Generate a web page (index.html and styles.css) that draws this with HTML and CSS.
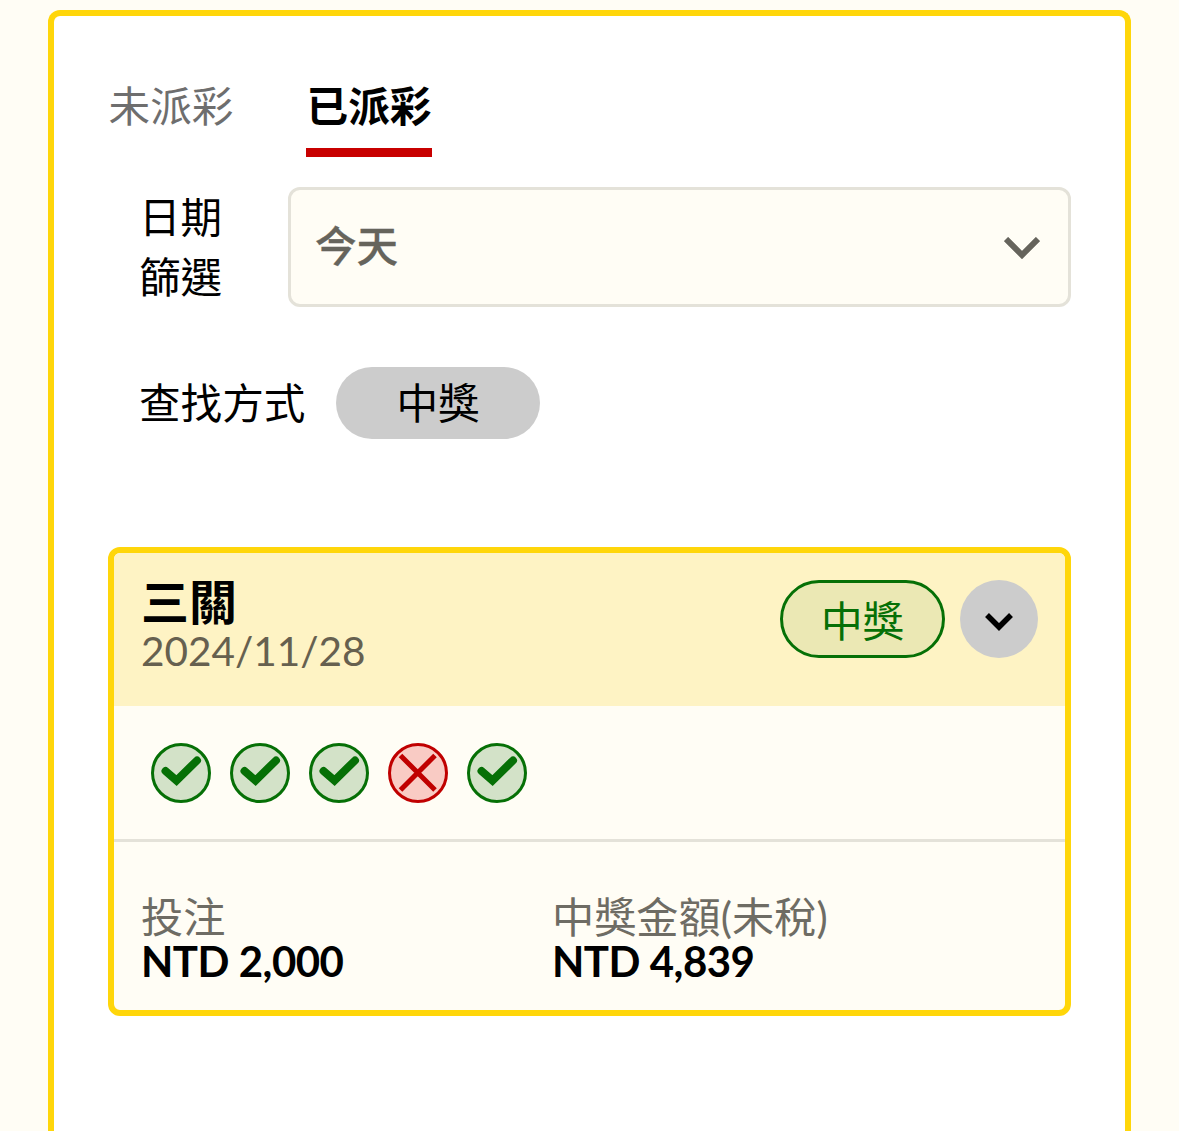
FILE: index.html
```html
<!DOCTYPE html>
<html lang="zh-Hant">
<head>
    <meta charset="utf-8">
    <title>已派彩</title>
    <link rel="stylesheet" href="styles.css">
</head>
<body>
<div class="panel">
    <div class="tabs">
        <div class="tab">未派彩</div>
        <div class="tab tab-active">已派彩</div>
    </div>

    <div class="date-row">
        <div class="date-label">日期<br>篩選</div>
        <div class="select">
            <span class="select-text">今天</span>
            <svg class="select-arrow" width="36" height="22" viewBox="0 0 36 22"><path d="M2 2 L18 18 L34 2" fill="none" stroke="#66645c" stroke-width="6"/></svg>
        </div>
    </div>

    <div class="find-row">
        <div class="find-label">查找方式</div>
        <div class="pill">中獎</div>
    </div>

    <div class="card">
        <div class="card-head">
            <div class="card-title">
                <div class="game">三關</div>
                <div class="date">2024/11/28</div>
            </div>
            <div class="status">中獎</div>
            <div class="toggle">
                <svg width="30" height="20" viewBox="0 0 30 20"><path d="M3 3 L15 15 L27 3" fill="none" stroke="#000" stroke-width="5.5"/></svg>
            </div>
        </div>

        <div class="legs">
            <svg class="leg" width="60" height="60" viewBox="0 0 60 60"><circle cx="30" cy="30" r="28.5" fill="#d3e2c8" stroke="#067006" stroke-width="3"/><path d="M14.500 28 L25.500 37.500 L46 17.500" fill="none" stroke="#067006" stroke-width="8" stroke-linecap="round"/></svg>
            <svg class="leg" width="60" height="60" viewBox="0 0 60 60"><circle cx="30" cy="30" r="28.5" fill="#d3e2c8" stroke="#067006" stroke-width="3"/><path d="M14.500 28 L25.500 37.500 L46 17.500" fill="none" stroke="#067006" stroke-width="8" stroke-linecap="round"/></svg>
            <svg class="leg" width="60" height="60" viewBox="0 0 60 60"><circle cx="30" cy="30" r="28.5" fill="#d3e2c8" stroke="#067006" stroke-width="3"/><path d="M14.500 28 L25.500 37.500 L46 17.500" fill="none" stroke="#067006" stroke-width="8" stroke-linecap="round"/></svg>
            <svg class="leg" width="60" height="60" viewBox="0 0 60 60"><circle cx="30" cy="30" r="28.5" fill="#f9cbc4" stroke="#c00000" stroke-width="3"/><path d="M12.500 12.500 L47 47 M47 12.500 L12.500 47" fill="none" stroke="#c00000" stroke-width="5"/></svg>
            <svg class="leg" width="60" height="60" viewBox="0 0 60 60"><circle cx="30" cy="30" r="28.5" fill="#d3e2c8" stroke="#067006" stroke-width="3"/><path d="M14.500 28 L25.500 37.500 L46 17.500" fill="none" stroke="#067006" stroke-width="8" stroke-linecap="round"/></svg>
        </div>

        <div class="amounts">
            <div class="amount">
                <div class="amount-label">投注</div>
                <div class="amount-value">NTD 2,000</div>
            </div>
            <div class="amount">
                <div class="amount-label">中獎金額(未稅)</div>
                <div class="amount-value">NTD 4,839</div>
            </div>
        </div>
    </div>
</div>
</body>
</html>
```

FILE: styles.css
```css
html,body{margin:0;padding:0;height:1131px;overflow:hidden;}
body{
	background:#fffdf5;
	font-family:"Lato","Noto Sans CJK TC",sans-serif;
	color:#000;
	padding:10px 48px 0;
	box-sizing:border-box;
}

.panel{
	background:#fff;
	border:6px solid #ffd60a;
	border-bottom:none;
	border-radius:12px 12px 0 0;
	padding:53px 54px 0;
	height:1121px;
	box-sizing:border-box;
	overflow:hidden;
}

.tabs{display:flex;gap:72px;}
.tab{
	font-size:41.6px;
	line-height:60px;
	color:#6e6e6e;
	padding:7px 0 12px;
	border-bottom:9px solid transparent;
	width:126px;
	text-align:center;
}
.tab-active{color:#000;font-weight:700;border-bottom-color:#c80000;}

.date-row{display:flex;align-items:center;margin-top:30px;}
.date-label{
	font-size:41.6px;
	line-height:60px;
	width:180px;
	padding-left:31px;
	box-sizing:border-box;
}
.select{
	flex:1;
	height:120px;
	box-sizing:border-box;
	background:#fffdf5;
	border:3px solid #e4e2d9;
	border-radius:12px;
	padding:0 28px 0 24px;
	display:flex;
	align-items:center;
	justify-content:space-between;
	font-size:41.6px;
	font-weight:500;
	color:#66645c;
}
.select-text{padding-bottom:6px;-webkit-text-stroke:0.3px #66645c;}
.select-arrow{margin-top:2px;}

.find-row{display:flex;align-items:center;margin-top:60px;padding-left:31px;}
.find-label{font-size:41.6px;line-height:72px;width:197px;}
.pill{
	width:204px;
	height:72px;
	line-height:72px;
	border-radius:36px;
	background:#ccc;
	text-align:center;
	font-size:41.6px;
}

.card{
	margin-top:108px;
	border:6px solid #ffd60a;
	border-radius:12px;
	background:#fffdf5;
	overflow:hidden;
}
.card-head{
	background:#fef3c4;
	height:153px;
	box-sizing:border-box;
	padding:27px 27px 0 28px;
	display:flex;
	align-items:flex-start;
}
.card-title{flex:1;}
.game{font-size:48px;font-weight:700;line-height:46px;margin:-1px 0 0 -1px;}
.date{font-size:40.5px;line-height:52px;color:#66604f;margin-left:-1px;}
.status{
	width:165px;
	height:78px;
	line-height:76px;
	box-sizing:border-box;
	border:3px solid #067006;
	border-radius:39px;
	background:#ebe8b4;
	color:#067006;
	text-align:center;
	font-size:41.6px;
}
.toggle{
	width:78px;
	height:78px;
	margin-left:15px;
	padding-top:5px;
	box-sizing:border-box;
	border-radius:50%;
	background:#ccc;
	display:flex;
	align-items:center;
	justify-content:center;
}

.legs{
	display:flex;
	gap:19px;
	padding:37px 37px 36px;
	border-bottom:3px solid #e4e2d9;
}
.leg{display:block;}

.amounts{display:flex;padding:52px 27px 28px;}
.amount{width:411px;}
.amount-label{font-size:42.2px;line-height:46px;color:#6e6c64;}
.amount-value{font-size:42px;line-height:42px;font-weight:700;letter-spacing:-0.5px;}
```
